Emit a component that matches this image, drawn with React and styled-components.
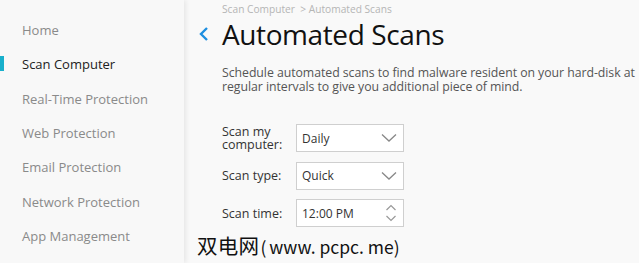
import React from "react";
import styled, { createGlobalStyle } from "styled-components";

const Global = createGlobalStyle`
  html, body { margin: 0; padding: 0; background: #f9f9f9; }
  body { font-family: "Open Sans", "Noto Sans", sans-serif; }
`;

const Page = styled.div`
  display: flex;
  width: 639px;
  height: 263px;
  overflow: hidden;
  background: #f9f9f9;
  position: relative;
`;

const Sidebar = styled.nav`
  width: 184px;
  flex: none;
  background: #f8f8f8;
  display: flex;
  flex-direction: column;
  padding-top: 13px;
  box-shadow: 2px 0 5px rgba(0, 0, 0, 0.08);
  position: relative;
  z-index: 1;
`;

const NavItem = styled.div`
  position: relative;
  height: 34.3px;
  display: flex;
  align-items: center;
  padding-left: 22px;
  font-size: 13px;
  color: ${(p) => (p.$active ? "#222" : "#8a8a8a")};
  white-space: nowrap;
  &::before {
    content: "";
    display: ${(p) => (p.$active ? "block" : "none")};
    position: absolute;
    left: 0;
    top: 9px;
    width: 4px;
    height: 15px;
    background: #19b0cc;
  }
`;

const Main = styled.main`
  flex: 1;
  padding: 2px 0 0 14px;
  display: flex;
  flex-direction: column;
`;

const Crumb = styled.div`
  padding-left: 24px;
  font-size: 10.2px;
  color: #b5b5b5;
  height: 14px;
  line-height: 14px;
`;

const TitleRow = styled.div`
  display: flex;
  align-items: center;
  gap: 12px;
  height: 36px;
`;

const Back = styled.svg`
  width: 12px;
  height: 16px;
  flex: none;
`;

const Title = styled.h1`
  margin: 0;
  font-size: 28px;
  font-weight: 400;
  color: #111;
  letter-spacing: -0.4px;
  line-height: 36px;
`;

const Desc = styled.p`
  margin: 14px 0 0 24px;
  font-size: 12.3px;
  line-height: 13.5px;
  color: #555;
  width: 420px;
  letter-spacing: -0.05px;
`;

const Form = styled.div`
  margin: 31px 0 0 24px;
  display: grid;
  grid-template-columns: 74px 108px;
  row-gap: 9.5px;
  align-items: center;
`;

const Label = styled.label`
  font-size: 12.5px;
  line-height: 13px;
  color: #333;
`;

const Field = styled.div`
  height: 28px;
  box-sizing: border-box;
  border: 1px solid #cfcfcf;
  background: #fff;
  display: flex;
  align-items: center;
  justify-content: space-between;
  padding: 0 6px 0 5px;
  font-size: 12px;
  color: #333;
`;

const Watermark = styled.div`
  position: absolute;
  left: 197px;
  top: 230px;
  display: flex;
  align-items: baseline;
  font-family: "Noto Sans CJK SC", sans-serif;
  font-size: 17.5px;
  color: #111;
  z-index: 2;
  white-space: nowrap;
`;

const Cjk = styled.span`
  font-size: 20.5px;
  letter-spacing: 0.3px;
`;

const Paren = styled.span`
  margin: 0 3px 0 1px;
`;

const Chevron = () => (
  <svg width="16" height="10" viewBox="0 0 16 10">
    <path d="M1 1.5 L8 8 L15 1.5" fill="none" stroke="#888" strokeWidth="1.3" />
  </svg>
);

const Spinner = () => (
  <svg width="12" height="20" viewBox="0 0 12 20">
    <path d="M1.5 7 L6 2.5 L10.5 7" fill="none" stroke="#999" strokeWidth="1.2" />
    <path d="M1.5 13 L6 17.5 L10.5 13" fill="none" stroke="#999" strokeWidth="1.2" />
  </svg>
);

const items = [
  "Home",
  "Scan Computer",
  "Real-Time Protection",
  "Web Protection",
  "Email Protection",
  "Network Protection",
  "App Management",
];

export default function App() {
  return (
    <>
      <Global />
      <Page>
        <Sidebar>
          {items.map((t) => (
            <NavItem key={t} $active={t === "Scan Computer"}>
              {t}
            </NavItem>
          ))}
        </Sidebar>
        <Main>
          <Crumb>Scan Computer&nbsp;&nbsp;&gt; Automated Scans</Crumb>
          <TitleRow>
            <Back viewBox="0 0 12 16">
              <path d="M9 2 L3 8 L9 14" fill="none" stroke="#1e8fe0" strokeWidth="2.4" />
            </Back>
            <Title>Automated Scans</Title>
          </TitleRow>
          <Desc>
            Schedule automated scans to find malware resident on your hard-disk at
            regular intervals to give you additional piece of mind.
          </Desc>
          <Form>
            <Label>Scan my computer:</Label>
            <Field>
              Daily
              <Chevron />
            </Field>
            <Label>Scan type:</Label>
            <Field>
              Quick
              <Chevron />
            </Field>
            <Label>Scan time:</Label>
            <Field>
              12:00 PM
              <Spinner />
            </Field>
          </Form>
        </Main>
        <Watermark>
          <Cjk>双电网</Cjk>
          <Paren>(</Paren>www. pcpc. me)
        </Watermark>
      </Page>
    </>
  );
}
